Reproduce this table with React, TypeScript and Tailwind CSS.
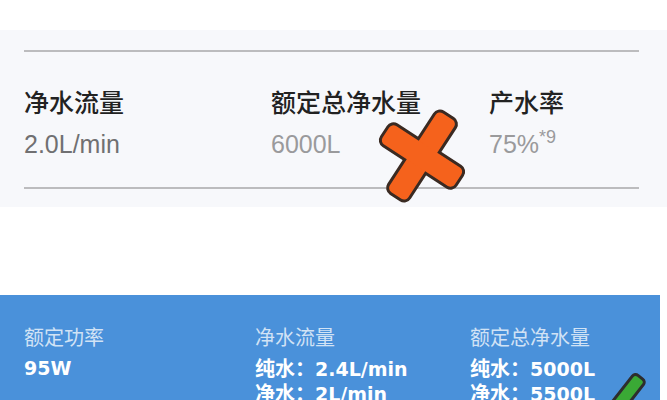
export default function App() {
  const cjk = "font-['Noto_Sans_CJK_SC',sans-serif]"
  const num = "font-['DejaVu_Sans','Noto_Sans_CJK_SC',sans-serif]"

  return (
    <div className="relative flex h-[400px] w-[667px] flex-col overflow-hidden bg-white">
      <div className="h-[30px] shrink-0" />

      {/* spec strip */}
      <section className="h-[177px] shrink-0 bg-[#f7f8fb] pl-[24px] pr-[28px] pt-[20px]">
        <div className="h-[2px] bg-[#bcbcbe]" />
        <div className="mt-[34px] flex">
          <div className="w-[247px]">
            <div className={`${cjk} text-[25px] font-medium leading-[30px] text-[#222]`}>净水流量</div>
            <div className="mt-[13px] font-['Liberation_Sans',sans-serif] text-[25px] leading-[30px] text-[#707072]">
              2.0L/min
            </div>
          </div>
          <div className="w-[218px]">
            <div className={`${cjk} text-[25px] font-medium leading-[30px] text-[#222]`}>额定总净水量</div>
            <div className="mt-[13px] font-['Liberation_Sans',sans-serif] text-[25px] leading-[30px] text-[#9a9a9c]">
              6000L
            </div>
          </div>
          <div className="flex-1">
            <div className={`${cjk} text-[25px] font-medium leading-[30px] text-[#222]`}>产水率</div>
            <div className="mt-[13px] font-['Liberation_Sans',sans-serif] text-[25px] leading-[30px] text-[#9a9a9c]">
              75%<sup className="relative -top-[10px] text-[18px]">*9</sup>
            </div>
          </div>
        </div>
        <div className="mt-[28px] h-[2px] bg-[#bcbcbe]" />
      </section>

      <div className="h-[88px] shrink-0" />

      {/* blue spec card */}
      <section className="flex w-[660px] flex-1 bg-[#4a91da] pl-[24px] pt-[30px] text-white">
        <div className="w-[231px]">
          <div className={`${cjk} text-[20px] leading-[24px] text-white/75`}>额定功率</div>
          <div className={`${num} mt-[7px] text-[19px] font-bold leading-[24px]`}>95W</div>
        </div>
        <div className="w-[215px]">
          <div className={`${cjk} text-[20px] leading-[24px] text-white/75`}>净水流量</div>
          <div className={`${num} mt-[7px] text-[19px] font-bold leading-[24px]`}>
            <span className={`${cjk} text-[20px]`}>纯水：</span>2.4L/min
          </div>
          <div className={`${num} text-[19px] font-bold leading-[24px]`}>
            <span className={`${cjk} text-[20px]`}>净水：</span>2L/min
          </div>
        </div>
        <div className="flex-1">
          <div className={`${cjk} text-[20px] leading-[24px] text-white/75`}>额定总净水量</div>
          <div className={`${num} mt-[7px] text-[19px] font-bold leading-[24px]`}>
            <span className={`${cjk} text-[20px]`}>纯水：</span>5000L
          </div>
          <div className={`${num} text-[19px] font-bold leading-[24px]`}>
            <span className={`${cjk} text-[20px]`}>净水：</span>5500L
          </div>
        </div>
      </section>

      {/* orange cross */}
      <svg className="absolute left-[372px] top-[106px]" width="100" height="100" viewBox="0 0 100 100">
        <g transform="translate(50 50) rotate(33)">
          <rect x="-11" y="-47" width="22" height="94" rx="5" fill="#3a2a22" stroke="#3a2a22" strokeWidth="6" />
          <rect x="-43" y="-11" width="86" height="22" rx="5" fill="#3a2a22" stroke="#3a2a22" strokeWidth="6" />
          <rect x="-11" y="-47" width="22" height="94" rx="5" fill="#f5621c" />
          <rect x="-43" y="-11" width="86" height="22" rx="5" fill="#f5621c" />
        </g>
      </svg>

      {/* green check (cut off) */}
      <svg className="absolute left-[600px] top-[365px]" width="60" height="40" viewBox="0 0 60 40">
        <g transform="translate(28 28) rotate(38)">
          <rect x="-7" y="-20" width="14" height="44" rx="4" fill="#3aa935" stroke="#2d2d2d" strokeWidth="3" />
        </g>
      </svg>
    </div>
  )
}
